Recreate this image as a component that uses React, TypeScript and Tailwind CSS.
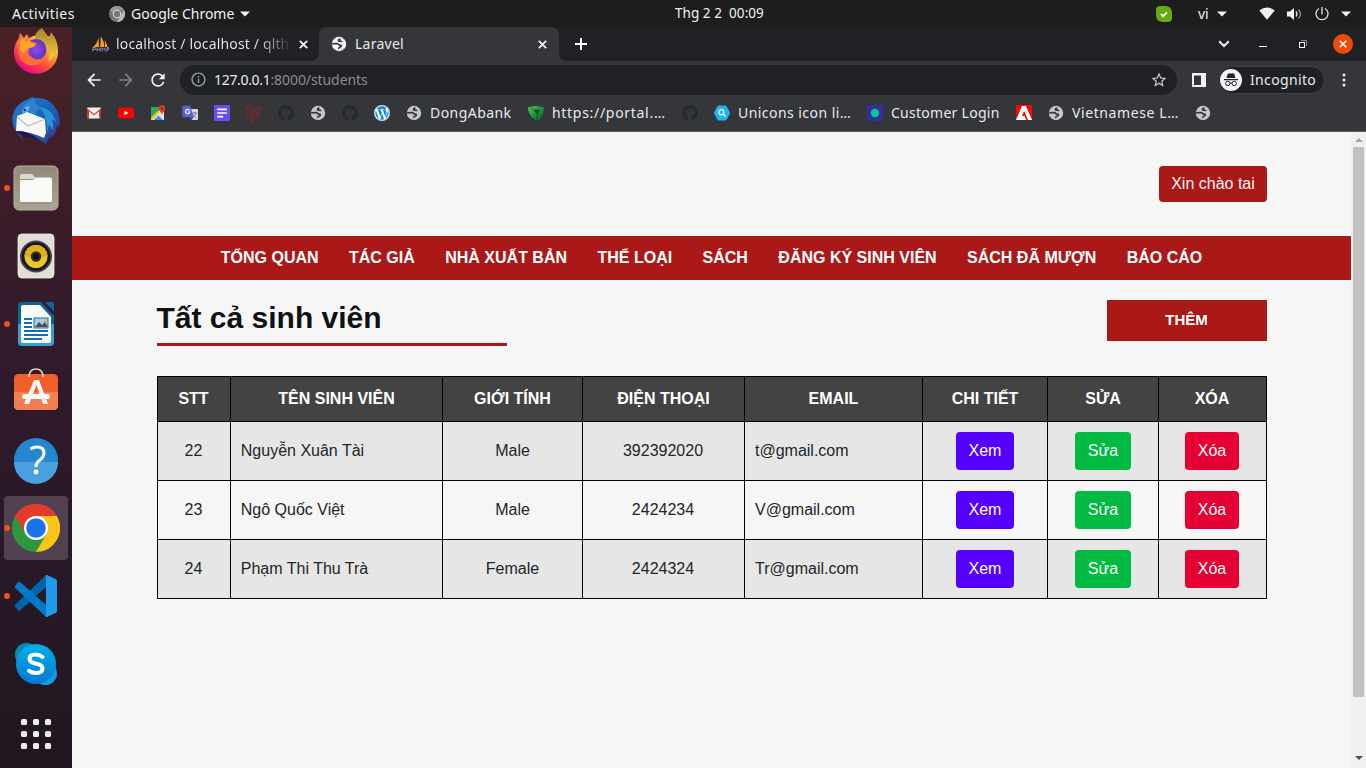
import React from "react";
import { SiLaravel } from "react-icons/si";
import { FaGithub, FaWordpress } from "react-icons/fa";
import { MdArrowBack, MdArrowForward, MdRefresh, MdStarBorder, MdInfoOutline } from "react-icons/md";

const Globe = ({ color = "#c4c7cc", size = 16 }: { color?: string; size?: number }) => (
  <svg width={size} height={size} viewBox="0 0 16 16" className="shrink-0">
    <circle cx="8" cy="8" r="7.2" fill={color} />
    <path d="M9.500 3C8 3.200 7 4 7.600 4.800 8.300 5.500 10.600 4.800 11 6M1.200 7.800L5.800 7.500C7.600 7.500 7.400 9 9 9.200 11 9.400 10.600 10.200 9.600 10.700 8.600 11.300 8.300 12.300 7 12.600" fill="none" stroke="#35363a" strokeWidth="1.700" />
  </svg>
);

const Gmail = () => (
  <svg width="16" height="16" viewBox="0 0 16 16">
    <rect x="1" y="2.5" width="14" height="11" rx="1" fill="#f1f1f1" />
    <path d="M1 13.5V3.2L8 9l7-5.8v10.3h-2V6.3L8 10.4 3 6.3v7.2z" fill="#e02d25" />
  </svg>
);
const Youtube = () => (
  <svg width="16" height="16" viewBox="0 0 16 16">
    <rect y="2.5" width="16" height="11" rx="2.8" fill="#f00" />
    <path d="M6.4 5.7v4.6l4-2.3z" fill="#fff" />
  </svg>
);
const Maps = () => (
  <svg width="16" height="16" viewBox="0 0 16 16">
    <path d="M1 2h13v13H1z" fill="#e4e5e5" />
    <path d="M1 2h9v3L1 13z" fill="#34a853" />
    <path d="M1 12.500l7-6.500 1.500 1.500L2.500 15H1z" fill="#fbc52c" />
    <path d="M4 15l4.500-4.500L13 15z" fill="#4285f4" />
    <path d="M12 .3a3.300 3.300 0 0 1 3.300 3.300c0 2-2.500 3.200-3.300 6.400-.8-3.200-3.300-4.400-3.300-6.400A3.300 3.300 0 0 1 12 .3z" fill="#dc3b2c" />
    <circle cx="12" cy="3.5" r="1.1" fill="#811d19" />
  </svg>
);
const Translate = () => (
  <svg width="16" height="16" viewBox="0 0 16 16">
    <path d="M7 4h8q1 0 1 1v9q0 1-1 1H9z" fill="#d5d7da" />
    <path d="M10 8h5M12.5 7v1M14 8c-.5 2-2 3.5-3 4M11 9l3 3.5" stroke="#6b7a8a" fill="none" strokeWidth=".9" />
    <path d="M1.2.8h7l3.5 11.4H1.2Q.3 12.200.3 11.300V1.700Q.3.8 1.200.8z" fill="#5b62d8" />
    <path d="M7.500 5.300A2.200 2.200 0 1 0 7.900 7H5.800" fill="none" stroke="#fff" strokeWidth="1.100" />
    <path d="M8 12.200h3.700L9 15.500z" fill="#3c37a5" />
  </svg>
);
const DocList = () => (
  <svg width="16" height="16" viewBox="0 0 16 16">
    <rect width="16" height="16" rx="1.200" fill="#684df4" />
    <path d="M3.200 4.300h9.600M3.200 8h9.600M3.200 11.700h6" stroke="#fff" strokeWidth="1.700" />
  </svg>
);
const Shield = () => (
  <svg width="16" height="16" viewBox="0 0 16 16">
    <defs>
      <linearGradient id="shieldFill" x2="1" y2="1">
        <stop stopColor="#59d848" />
        <stop offset=".5" stopColor="#139438" />
        <stop offset="1" stopColor="#075d2b" />
      </linearGradient>
    </defs>
    <path d="M0 2.500Q8-.7 16 2.500C16 9 13.500 13.500 9.200 16 4 13.500.5 9 0 2.500z" fill="url(#shieldFill)" />
    <path d="M5.300 4.800h6.200L9.300 9.800z" fill="#24352f" />
    <path d="M5.300 4.800L3 2.700M9.300 9.800l-.2 6" stroke="#0b5b2c" />
  </svg>
);
const Unicons = () => (
  <svg width="16" height="16" viewBox="0 0 16 16">
    <path d="M4.800.5h6.400Q12 .5 12.500 1.300l3.200 5.800q.5.900 0 1.800l-3.200 5.800q-.5.800-1.300.8H4.800q-.8 0-1.300-.8L.3 8.900q-.5-.9 0-1.800l3.200-5.800Q4 .5 4.800.5z" fill="#1cb5f7" />
    <circle cx="7.300" cy="7.200" r="2.500" fill="none" stroke="#fff" strokeWidth="1.200" />
    <path d="M9.200 9l2.400 2.500" stroke="#fff" strokeWidth="1.300" />
  </svg>
);
const Customer = () => (
  <svg width="16" height="16" viewBox="0 0 16 16">
    <rect width="16" height="16" fill="#32309b" />
    <circle cx="8" cy="8" r="4.200" fill="#04c69c" />
  </svg>
);
const Adobe = () => (
  <svg width="16" height="16" viewBox="0 0 16 16">
    <rect width="16" height="15" fill="#fa0505" />
    <path d="M6 1h4l6 14h-4L8.200 6 6 11h2.600l1.500 4H0z" fill="#fff" />
  </svg>
);
const Sail = () => (
  <svg width="17" height="16" viewBox="0 0 17 16">
    <path d="M1 11Q5 8 6.500 1.500L7 11zM8 11Q9 6 8.500.5 12 4 12.500 11zM13 11q.5-4-.5-7Q15 7 15.500 11z" fill="#f89c1c" />
    <path d="M.8 15.500v-4h2.500v2H1m4 2v-4m0 2h3m0-2v4m2-3.700v3.700m0-3.700l1.500 1.500 1.500-1.500v3.700m2 0v-4h1.500v2H15" fill="none" stroke="#8d89b5" strokeWidth="1" />
  </svg>
);

const Close = ({ size = 9, color = "#f1f2f4" }: { size?: number; color?: string }) => (
  <svg width={size} height={size} viewBox="0 0 9 9">
    <path d="M.8.8l7.400 7.400M8.200.8L.8 8.200" stroke={color} strokeWidth="1.800" />
  </svg>
);
const Caret = () => (
  <svg width="10" height="6" viewBox="0 0 10 6" className="shrink-0">
    <path d="M0 .5h10L5 5.500z" fill="#f2f2f2" />
  </svg>
);

/* ---------- Dock icons ---------- */
const Firefox = () => (
  <svg width="48" height="48" viewBox="0 0 48 48">
    <defs>
      <linearGradient id="ffBody" x1=".85" y1=".1" x2=".25" y2=".95">
        <stop stopColor="#fff04a" />
        <stop offset=".35" stopColor="#ff9a30" />
        <stop offset=".65" stopColor="#ff4a42" />
        <stop offset="1" stopColor="#e60583" />
      </linearGradient>
      <linearGradient id="ffTail" x2="0" y2="1">
        <stop stopColor="#a5832f" />
        <stop offset="1" stopColor="#fbd036" />
      </linearGradient>
      <radialGradient id="ffCore">
        <stop stopColor="#8a4dea" />
        <stop offset="1" stopColor="#5f35c2" />
      </radialGradient>
    </defs>
    <path d="M2 24C2 18 4 14 7 10l1-5 4 5 3-4 1 5q8-6 16-3l9 1q5 6 5 15.500A22 21.500 0 0 1 2 24z" fill="url(#ffBody)" />
    <path d="M23 12Q22 4 30 0l5 7 2 3 2-6q7 8 6.500 17Q42 31 36 33 41 20 30 14z" fill="url(#ffTail)" />
    <circle cx="24" cy="21.500" r="10.500" fill="url(#ffCore)" />
    <path d="M7 11l1-5 5 6 3-5 2 6 7 2q-2 4-7 5-3 4 0 8 8 7 17 0-5 11-18 9Q3 34 7 11z" fill="#ff6d37" />
    <path d="M8 14l2-4 5 4 1-4 3 5 5 1q-2 4-8 4l-4 5q-6-2-4-11z" fill="#ffa42d" />
  </svg>
);
const Thunderbird = () => (
  <svg width="48" height="48" viewBox="0 0 48 48">
    <defs>
      <linearGradient id="tbBody" x2="1" y2="1">
        <stop stopColor="#2679cf" />
        <stop offset=".5" stopColor="#1b64ba" />
        <stop offset="1" stopColor="#36318f" />
      </linearGradient>
    </defs>
    <path d="M16 3L22 .5l-1 2Q34 0 42 10q8 10 5 21l-2-2q0 8-6 13l-1-2-4 8Q20 38 7 37l5 7Q-1 34 .5 20 3 8 16 3z" fill="url(#tbBody)" />
    <path d="M9 14Q14 4 24 2q-4 5 6 10-8 2-8 11l-9-2z" fill="#2a83cc" />
    <path d="M5 20l10-4 18 7 1 14-2 5Q20 36 4 35z" fill="#f7f7f8" />
    <path d="M5 21l11 9 17-7" fill="none" stroke="#b7babf" strokeWidth="1.200" />
    <path d="M10 17L13 11l5-1-2 5z" fill="#66b7e2" />
    <circle cx="13" cy="14" r="1.200" fill="#12346a" />
    <path d="M28 12Q39 11 44 26l-4-3q2 6 1 11l-4-5-2 8Q36 20 28 12z" fill="#2594d6" />
    <path d="M4 35q12-1 22 8Q12 42 7 38z" fill="#251652" />
  </svg>
);
const Files = () => (
  <svg width="48" height="48" viewBox="0 0 48 48">
    <defs>
      <linearGradient id="filesBg" x2="0" y2="1">
        <stop stopColor="#928a7a" />
        <stop offset="1" stopColor="#aaa392" />
      </linearGradient>
    </defs>
    <rect x="2" y="2" width="44" height="44" rx="5" fill="url(#filesBg)" stroke="#b8b1a1" />
    <path d="M8 12q0-2 2-2h9q2 0 3 2l2 3H8z" fill="#dbd7cd" />
    <path d="M8 16h12q2 0 4-2.500h14q2 0 2 2V36q0 2.500-2 2.500H10.500Q8 38.500 8 36z" fill="#f9f9f8" />
    <path d="M9 38.800h30" stroke="#7a7263" strokeWidth=".8" />
  </svg>
);
const Rhythmbox = () => (
  <svg width="48" height="48" viewBox="0 0 48 48">
    <rect x="6" y="2" width="36" height="44" rx="4" fill="#e2ded4" stroke="#f3efe8" strokeWidth=".8" />
    <circle cx="24" cy="24.500" r="16" fill="#45464c" />
    <circle cx="24" cy="24.500" r="14.300" fill="#15161d" />
    <circle cx="24" cy="24.500" r="11.500" fill="#efc527" />
    <path d="M12.500 24.500a11.500 11.500 0 0 1 23 0z" fill="#e2ad16" />
    <circle cx="24" cy="24.500" r="5.200" fill="#2a2d31" />
    <circle cx="24" cy="24.500" r="3" fill="#111317" />
  </svg>
);
const Writer = () => (
  <svg width="48" height="48" viewBox="0 0 48 48">
    <path d="M10 2h19l13 14v26q0 4-4 4H10q-4 0-4-4V6q0-4 4-4z" fill="#0b6599" />
    <path d="M6 24h36v18q0 4-4 4H10q-4 0-4-4z" fill="#3b9dcd" />
    <path d="M33 2h7q2 0 2 2v8z" fill="#0b6599" />
    <path d="M11 5h17l11 12v24q0 2-2 2H11q-2 0-2-2V7q0-2 2-2z" fill="#fafafa" />
    <path d="M12 19h8M12 23h8M12 27h8M12 31h24M12 35h24M12 39h18" stroke="#136eac" strokeWidth="2" />
    <rect x="22" y="18" width="14" height="10" fill="#9bd0f2" stroke="#246aa1" />
    <path d="M23 27l4-5 3 3 3-3 3 5z" fill="#4c5156" />
    <circle cx="33" cy="20.500" r="1.500" fill="#f5b42c" />
  </svg>
);
const Software = () => (
  <svg width="48" height="48" viewBox="0 0 48 48">
    <rect x="2" y="6" width="44" height="36" rx="4.500" fill="#f0602a" />
    <path d="M2 24h44v13.500q0 4.500-4.500 4.500h-35Q2 42 2 37.500z" fill="#f27f50" />
    <path d="M17 9V7.500Q18 1 24 1t7 6.500V9" fill="none" stroke="#f2d3a7" strokeWidth="1.700" />
    <path d="M22 12h5l9 24h-5L24.500 17 17 36h-5z" fill="#f8f5f3" />
    <rect x="10" y="26" width="28" height="5" rx="2.500" fill="#fff" />
  </svg>
);
const Help = () => (
  <svg width="48" height="48" viewBox="0 0 48 48">
    <circle cx="24" cy="24" r="22" fill="#2587cf" />
    <path d="M2 26h44a22 22 0 0 1-44 0z" fill="#48a0df" />
    <path d="M18.500 13q3-2 6.500-2 7 0 7 6 0 4-4 7-4 2.500-4 7" fill="none" stroke="#fff" strokeWidth="3" />
    <circle cx="24" cy="36" r="2.400" fill="#fff" />
  </svg>
);
const Chrome = () => (
  <svg width="48" height="48" viewBox="0 0 48 48">
    <circle cx="24" cy="24" r="24" fill="#2d973f" />
    <path d="M3.200 12A24 24 0 0 1 44.800 12H24L13.600 30z" fill="#e33b2e" />
    <path d="M44.800 12A24 24 0 0 1 24 48l10.400-18L24 12z" fill="#fcc419" />
    <circle cx="24" cy="24" r="12" fill="#fff" />
    <circle cx="24" cy="24" r="9.800" fill="#1a73e8" />
  </svg>
);
const VsCode = () => (
  <svg width="48" height="48" viewBox="0 0 48 48">
    <path d="M3 34.500q-.7-1 .3-2L34 3v12L8 38.500q-1 .7-2 0z" fill="#0065a9" />
    <path d="M3 14q-.7 1 .3 2L34 45V33L8 10q-1-.7-2 0z" fill="#007acc" />
    <path d="M34 3.500Q34 2.500 35 3l9 4.300q1 .5 1 1.700v30q0 1.200-1 1.700L35 45q-1 .5-1-.5z" fill="#2199ea" />
  </svg>
);
const Skype = () => (
  <svg width="48" height="48" viewBox="0 0 48 48">
    <defs>
      <linearGradient id="skypeFill" x2="0" y2="1">
        <stop stopColor="#00aee9" />
        <stop offset="1" stopColor="#0878d4" />
      </linearGradient>
    </defs>
    <circle cx="14.500" cy="14.500" r="11.500" fill="#0788ba" />
    <circle cx="33.500" cy="33.500" r="11.500" fill="#0e9de0" />
    <circle cx="24" cy="24" r="20" fill="url(#skypeFill)" />
    <path d="M30.500 17q-3-2.500-7-2.500-6 0-6 4.300 0 3.500 6 4.700 7 1.300 7 5 0 4.500-6.500 4.500-4 0-7-2.200" fill="none" stroke="#fff" strokeWidth="4" strokeLinecap="round" />
  </svg>
);

const dock = [
  { icon: <Firefox />, dot: false, active: false },
  { icon: <Thunderbird />, dot: false, active: false },
  { icon: <Files />, dot: true, active: false },
  { icon: <Rhythmbox />, dot: false, active: false },
  { icon: <Writer />, dot: true, active: false },
  { icon: <Software />, dot: false, active: false },
  { icon: <Help />, dot: false, active: false },
  { icon: <Chrome />, dot: true, active: true },
  { icon: <VsCode />, dot: true, active: false },
  { icon: <Skype />, dot: false, active: false },
];

const github = <FaGithub size={16} color="#24292f" />;
const bookmarks: { icon: React.ReactNode; label?: string; width?: string }[] = [
  { icon: <Gmail /> },
  { icon: <Youtube /> },
  { icon: <Maps /> },
  { icon: <Translate /> },
  { icon: <DocList /> },
  { icon: <SiLaravel size={16} color="#d0181c" /> },
  { icon: github },
  { icon: <Globe /> },
  { icon: github },
  { icon: <span className="flex size-4 rounded-full bg-white"><FaWordpress size={16} color="#1d87c9" /></span> },
  { icon: <Globe />, label: "DongAbank", width: "w-[82px] tracking-[0.45px]" },
  { icon: <Shield />, label: "https://portal.…", width: "w-[114px] tracking-[0.7px]" },
  { icon: github },
  { icon: <Unicons />, label: "Unicons icon li…", width: "w-[113px] tracking-[0.45px]" },
  { icon: <Customer />, label: "Customer Login", width: "w-[109px] tracking-[0.27px]" },
  { icon: <Adobe /> },
  { icon: <Globe />, label: "Vietnamese L…", width: "w-[107px] tracking-[0.6px]" },
  { icon: <Globe /> },
];

const nav = ["TỔNG QUAN", "TÁC GIẢ", "NHÀ XUẤT BẢN", "THỂ LOẠI", "SÁCH", "ĐĂNG KÝ SINH VIÊN", "SÁCH ĐÃ MƯỢN", "BÁO CÁO"];
const heads = ["STT", "TÊN SINH VIÊN", "GIỚI TÍNH", "ĐIỆN THOẠI", "EMAIL", "CHI TIẾT", "SỬA", "XÓA"];
const students = [
  { id: "22", name: "Nguyễn Xuân Tài", sex: "Male", phone: "392392020", email: "t@gmail.com" },
  { id: "23", name: "Ngô Quốc Việt", sex: "Male", phone: "2424234", email: "V@gmail.com" },
  { id: "24", name: "Phạm Thi Thu Trà", sex: "Female", phone: "2424324", email: "Tr@gmail.com" },
];

function TopBar() {
  return (
    <header className="flex h-[27px] shrink-0 items-center bg-[#1d1d1d] text-[14px] text-[#f2f2f2]">
      <span className="ml-3 w-[97px] tracking-[0.45px]">Activities</span>
      <svg width="16" height="16" viewBox="0 0 16 16">
        <circle cx="8" cy="8" r="8" fill="#777" />
        <path d="M1 4A8 8 0 0 1 15 4H8L4 8z" fill="#969696" />
        <path d="M15 4A8 8 0 0 1 8 16l4-7z" fill="#b9b9b9" />
        <circle cx="8" cy="8" r="4.200" fill="#ddd" />
        <circle cx="8" cy="8" r="3.200" fill="#777" />
      </svg>
      <span className="ml-[6px] w-[109px]">Google Chrome</span>
      <Caret />
      <span className="ml-[425px] w-[481px] whitespace-pre pb-px text-[13.500px] tracking-[0.05px]">Thg 2 2  00:09</span>
      <svg width="16" height="16" viewBox="0 0 16 16">
        <path d="M4 0h5q7 0 7 7v5q0 4-4 4H7Q0 16 0 9V4q0-4 4-4z" fill="#66ab16" />
        <path d="M5 8l2.200 2.200L11 6.400" fill="none" stroke="#fff" strokeWidth="1.700" />
      </svg>
      <span className="ml-[26px] w-[19px]">vi</span>
      <Caret />
      <svg width="16" height="13" viewBox="0 0 16 13" className="ml-8">
        <path d="M.3 3.500Q8-2.500 15.700 3.500L8 12.800z" fill="#f2f2f2" />
      </svg>
      <svg width="15" height="14" viewBox="0 0 15 14" className="ml-[12px]">
        <path d="M0 4.500h3L7 1v12L3 9.500H0z" fill="#f2f2f2" />
        <path d="M9 4.500q2 2.500 0 5" fill="none" stroke="#e8e8e8" strokeWidth="1.300" />
        <path d="M11.500 2.500q4 4.500 0 9" fill="none" stroke="#999" strokeWidth="1.200" />
      </svg>
      <svg width="14" height="14" viewBox="0 0 14 14" className="ml-[13px]">
        <path d="M4 1.500a6 6 0 1 0 6 0M7 0v7.500" fill="none" stroke="#e4e4e4" strokeWidth="1.300" />
      </svg>
      <span className="ml-[12px] flex"><Caret /></span>
    </header>
  );
}

function Dock() {
  return (
    <aside className="flex w-[72px] shrink-0 flex-col items-center overflow-hidden bg-linear-to-b from-[#4a2126] via-[#301a2c] via-45% to-[#211720]">
      <div className="-mt-[7px] flex flex-col gap-1">
        {dock.map((d, i) => (
          <div key={i} className={d.active ? "flex size-16 items-center rounded bg-[#514150]" : "flex size-16 items-center"}>
            <span className={d.dot ? "size-[6px] rounded-full bg-[#e95420]" : "size-[6px]"} />
            <span className="ml-[2px] flex">{d.icon}</span>
          </div>
        ))}
      </div>
      <div className="mt-[23px] grid grid-cols-3 gap-[6px]">
        {Array.from({ length: 9 }, (_, i) => (
          <span key={i} className="size-[6px] rounded-[1.500px] bg-[#eeeeec]" />
        ))}
      </div>
    </aside>
  );
}

function BrowserChrome() {
  return (
    <div className="shrink-0 bg-[#35363a] text-[14px] text-[#e8eaed]">
      <div className="flex h-[34px] bg-[#35363a]">
        <div className="flex w-[247px] items-center rounded-br-lg bg-[#202124] pl-5">
          <Sail />
          <span className="ml-[7px] w-[177px] overflow-hidden whitespace-nowrap bg-linear-to-r from-[#e8eaed] from-80% to-transparent bg-clip-text pb-0.5 tracking-[0.150px] text-transparent">localhost / localhost / qlth</span>
          <span className="ml-[6px] flex"><Close /></span>
        </div>
        <div className="flex w-[240px] bg-[#202124]">
          <div className="flex w-[240px] items-center rounded-t-lg bg-[#35363a] pl-3">
            <Globe color="#f3f4f5" />
            <span className="ml-2 w-[183px] pb-0.5 tracking-[0.25px]">Laravel</span>
            <Close />
          </div>
        </div>
        <div className="flex flex-1 items-center rounded-bl-lg bg-[#202124] pl-[15px] pr-[13px]">
          <svg width="14" height="14" viewBox="0 0 14 14">
            <path d="M7 1v12M1 7h12" stroke="#fff" strokeWidth="2" />
          </svg>
          <svg width="12" height="8" viewBox="0 0 12 8" className="ml-auto"><path d="M1.200 1.200L6 6l4.800-4.800" fill="none" stroke="#eee" strokeWidth="2" /></svg>
          <span className="ml-[29px] mt-[5px] h-px w-2 bg-white" />
          <svg width="8" height="8" viewBox="0 0 8 8" className="ml-[32px]">
            <path d="M2 .5h5.500V6" fill="none" stroke="#888" />
            <rect x=".5" y="2.500" width="5" height="5" fill="none" stroke="#fff" />
          </svg>
          <span className="ml-[26px] flex size-5 items-center justify-center rounded-full bg-[#ef4b08]"><Close size={8} color="#fff" /></span>
        </div>
      </div>
      <div className="flex h-[37px] items-center">
        <span className="ml-3 flex w-8"><MdArrowBack size={20} color="#f1f3f4" /></span>
        <span className="flex w-8"><MdArrowForward size={20} color="#818286" /></span>
        <span className="flex w-8"><MdRefresh size={20} color="#f1f3f4" /></span>
        <div className="flex h-[30px] w-[997px] items-center rounded-full bg-[#202124] pl-[10px]">
          <MdInfoOutline size={17} color="#9aa0a6" />
          <span className="ml-[7px] tracking-[-0.080px] text-[#8b8e93]"><span className="tracking-[-0.320px] text-[#e8eaed]">127.0.0.1</span>:8000/students</span>
          <span className="ml-auto mr-[9px] flex"><MdStarBorder size={18} color="#c8cacd" /></span>
        </div>
        <svg width="14" height="14" viewBox="0 0 14 14" className="ml-[15px]">
          <path d="M0 0h14v14H0zM2 2.500v9.500h7V2.500z" fill="#f1f3f4" fillRule="evenodd" />
        </svg>
        <div className="ml-[12px] flex h-7 w-[107px] items-center rounded-full border border-[#404146] bg-[#202124] pl-px">
          <svg width="22" height="22" viewBox="0 0 22 22" className="shrink-0">
            <circle cx="11" cy="11" r="11" fill="#f1f3f4" />
            <path d="M6.500 9l1.300-4.300q2-.8 3.200 0 1.200-.8 3.200 0L15.500 9zM4 10h14v1.300H4z" fill="#202124" />
            <circle cx="7.800" cy="14.500" r="2.200" fill="none" stroke="#202124" />
            <circle cx="14.200" cy="14.500" r="2.200" fill="none" stroke="#202124" />
            <path d="M10 14.300q1-.6 2 0" fill="none" stroke="#202124" />
          </svg>
          <span className="ml-2 tracking-[0.35px]">Incognito</span>
        </div>
        <svg width="4" height="14" viewBox="0 0 4 14" className="ml-[17px]">
          <circle cx="2" cy="2" r="1.500" fill="#eee" />
          <circle cx="2" cy="7" r="1.500" fill="#eee" />
          <circle cx="2" cy="12" r="1.500" fill="#eee" />
        </svg>
      </div>
      <div className="flex h-[34px] items-center gap-4 border-b border-[#5f5f63] pl-[14px] pb-[3px]">
        {bookmarks.map((b, i) => (
          <div key={i} className="flex h-4 shrink-0 items-center gap-2">
            {b.icon}
            {b.label && <span className={`${b.width} whitespace-nowrap pb-0.5`}>{b.label}</span>}
          </div>
        ))}
      </div>
    </div>
  );
}

const cell = "flex items-center justify-center border-l border-t border-black";
const button = "flex h-[38px] items-center justify-center rounded pl-px text-white";

function Page() {
  return (
    <div className="flex min-h-0 flex-1 bg-[#f6f6f6] font-['Liberation_Sans',sans-serif] text-[16px] text-[#212529]">
      <main className="w-[1279px]">
        <div className="flex h-[104px] items-center justify-end pr-[84px]">
          <span className="flex h-9 w-[108px] items-center justify-center rounded bg-[#ab1818] text-[#f5f5f5]">Xin chào tai</span>
        </div>
        <nav className="flex h-11 items-center justify-center gap-[30.450px] bg-[#ab1818] font-bold text-white">
          {nav.map((n) => <span key={n} className="whitespace-nowrap">{n}</span>)}
        </nav>
        <div className="ml-[84.5px] w-[1110px] pt-5">
          <div className="flex items-start justify-between">
            <h1 className="h-[46px] w-[350px] border-b-[3px] border-[#ab1818] text-[30px] font-bold leading-9 text-[#111]">Tất cả sinh viên</h1>
            <span className="flex h-[41px] w-40 items-center justify-center bg-[#ab1818] text-[15px] font-bold text-white">THÊM</span>
          </div>
          <div className="mt-[30px] border-b border-r border-black">
            <div className="grid h-[45px] grid-cols-[73px_212px_140px_162px_178px_125px_111px_108px] bg-[#434343] font-bold text-white">
              {heads.map((h, i) => <div key={h} className={i === 0 || i === 7 ? cell : `${cell} pl-px`}>{h}</div>)}
            </div>
            {students.map((s, i) => (
              <div key={s.id} className={`grid h-[59px] grid-cols-[73px_212px_140px_162px_178px_125px_111px_108px] ${i % 2 ? "bg-[#f6f6f6]" : "bg-[#e6e6e6]"}`}>
                <div className={cell}>{s.id}</div>
                <div className="flex items-center border-l border-t border-black pl-[10.300px]">{s.name}</div>
                <div className={`${cell} pl-px`}>{s.sex}</div>
                <div className={cell}>{s.phone}</div>
                <div className="flex items-center border-l border-t border-black pl-[10.500px]">{s.email}</div>
                <div className={cell}><span className={`${button} w-[58px] bg-[#5500ff]`}>Xem</span></div>
                <div className={cell}><span className={`${button} w-14 bg-[#00ba42]`}>Sửa</span></div>
                <div className={`${cell} pr-px`}><span className={`${button} w-[54px] bg-[#e40032]`}>Xóa</span></div>
              </div>
            ))}
          </div>
        </div>
      </main>
      <div className="flex w-[15px] flex-col items-center bg-[#f0f0f0]">
        <svg width="8" height="4" viewBox="0 0 8 4" className="mt-[6px]"><path d="M4 0l4 4H0z" fill="#a3a3a3" /></svg>
        <div className="mt-[5px] h-[550px] w-[11px] bg-[#c1c1c1]" />
        <svg width="8" height="4" viewBox="0 0 8 4" className="mb-2 mt-auto"><path d="M0 0h8L4 4z" fill="#505050" /></svg>
      </div>
    </div>
  );
}

export default function App() {
  return (
    <div className="flex h-[768px] w-[1366px] flex-col overflow-hidden font-['Noto_Sans',sans-serif]">
      <TopBar />
      <div className="flex min-h-0 flex-1">
        <Dock />
        <div className="flex w-[1294px] flex-col">
          <BrowserChrome />
          <Page />
        </div>
      </div>
    </div>
  );
}
